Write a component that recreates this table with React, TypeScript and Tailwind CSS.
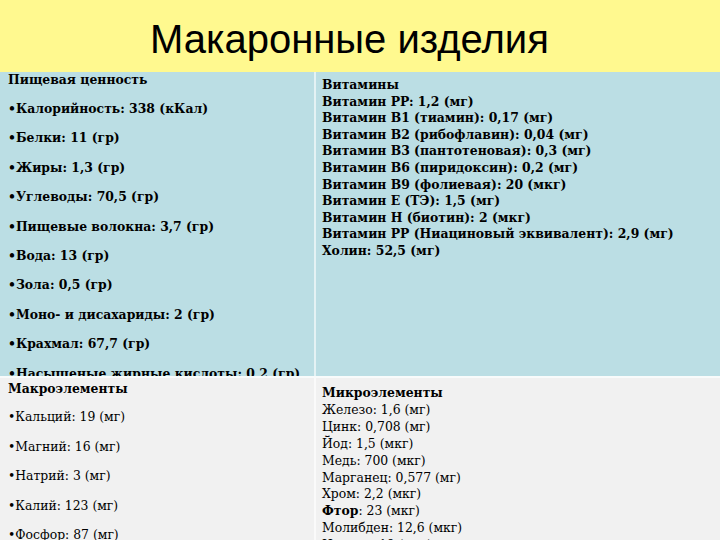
import React from 'react';

const nutrition = [
  'Калорийность: 338 (кКал)',
  'Белки: 11 (гр)',
  'Жиры: 1,3 (гр)',
  'Углеводы: 70,5 (гр)',
  'Пищевые волокна: 3,7 (гр)',
  'Вода: 13 (гр)',
  'Зола: 0,5 (гр)',
  'Моно- и дисахариды: 2 (гр)',
  'Крахмал: 67,7 (гр)',
  'Насыщеные жирные кислоты: 0,2 (гр)',
];

const vitamins = [
  'Витамин PP: 1,2 (мг)',
  'Витамин B1 (тиамин): 0,17 (мг)',
  'Витамин B2 (рибофлавин): 0,04 (мг)',
  'Витамин B3 (пантотеновая): 0,3 (мг)',
  'Витамин B6 (пиридоксин): 0,2 (мг)',
  'Витамин B9 (фолиевая): 20 (мкг)',
  'Витамин E (ТЭ): 1,5 (мг)',
  'Витамин H (биотин): 2 (мкг)',
  'Витамин PP (Ниациновый эквивалент): 2,9 (мг)',
  'Холин: 52,5 (мг)',
];

const macro = [
  'Кальций: 19 (мг)',
  'Магний: 16 (мг)',
  'Натрий: 3 (мг)',
  'Калий: 123 (мг)',
  'Фосфор: 87 (мг)',
];

const micro = [
  ['Железо', '1,6 (мг)'],
  ['Цинк', '0,708 (мг)'],
  ['Йод', '1,5 (мкг)'],
  ['Медь', '700 (мкг)'],
  ['Марганец', '0,577 (мг)'],
  ['Хром', '2,2 (мкг)'],
  ['Фтор', '23 (мкг)'],
  ['Молибден', '12,6 (мкг)'],
  ['Никель', '19 (мкг)'],
];

const serif = { fontFamily: '"DejaVu Serif", serif' };

export default function App() {
  return (
    <div className="w-[720px] h-[540px] overflow-hidden bg-white text-black">
      <div className="h-[72px] bg-[#fff98f] pl-[150px] pt-[19px]">
        <h1 className="text-[40px] leading-[40px] font-['Liberation_Sans',Arial,sans-serif]">
          Макаронные изделия
        </h1>
      </div>

      <div className="grid grid-cols-[314px_2px_404px] text-[12.4px]" style={serif}>
        {/* top row */}
        <div className="h-[304px] bg-[#bbdee4] pl-[8px] font-bold">
          <div className="leading-[16px]">Пищевая ценность</div>
          <div className="mt-[6px]">
            {nutrition.map((n) => (
              <div key={n} className="leading-[29.4px] whitespace-nowrap">•{n}</div>
            ))}
          </div>
        </div>
        <div className="h-[304px] bg-[#e4f2f4]" />
        <div className="h-[304px] bg-[#bbdee4] pl-[6px] pt-[5px] font-bold leading-[16.6px]">
          <div>Витамины</div>
          {vitamins.map((v) => (
            <div key={v} className="whitespace-nowrap">{v}</div>
          ))}
        </div>

        {/* divider row */}
        <div className="col-span-3 h-[2px] bg-[#f8fbfb]" />

        {/* bottom row */}
        <div className="h-[162px] bg-[#f1f1f1] pl-[8px] pt-[3px]">
          <div className="leading-[16px] font-bold">Макроэлементы</div>
          <div className="mt-[5px]">
            {macro.map((m) => (
              <div key={m} className="leading-[29.5px] whitespace-nowrap">•{m}</div>
            ))}
          </div>
        </div>
        <div className="h-[162px] bg-[#fafafa]" />
        <div className="h-[162px] bg-[#f1f1f1] pl-[6px] pt-[7px] leading-[16.9px]">
          <div className="font-bold">Микроэлементы</div>
          {micro.map(([k, v]) => (
            <div key={k} className="whitespace-nowrap">
              <span className={k === 'Фтор' ? 'font-bold' : ''}>{k}</span>: {v}
            </div>
          ))}
        </div>
      </div>
    </div>
  );
}
